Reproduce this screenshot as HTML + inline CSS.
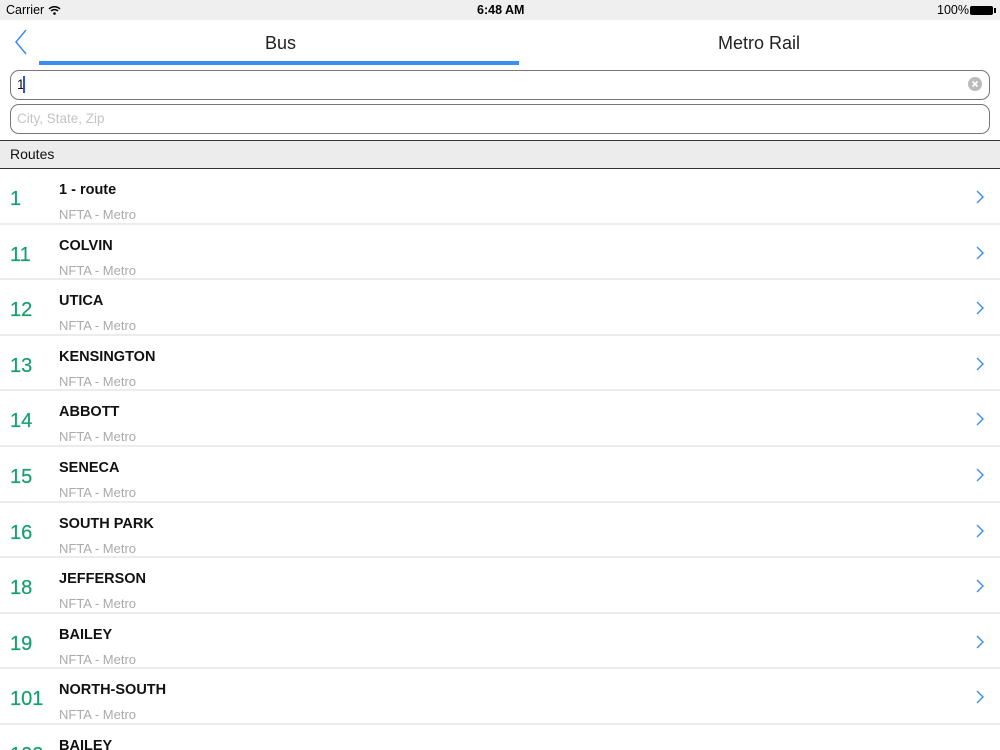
<!DOCTYPE html>
<html style="width:1000px;height:750px;overflow:hidden"><head><meta charset="utf-8"><style>
*{margin:0;padding:0;box-sizing:border-box}
body{width:1000px;height:750px;overflow:hidden;background:#fff;font-family:"Liberation Sans",Helvetica,Arial,sans-serif;position:relative}
.sb{position:absolute;left:0;top:0;width:1000px;height:20px;background:#efefef;font-size:12.5px;color:#000}
.sb span{position:absolute;top:3px}
.tab{position:absolute;top:33px;font-size:18px;color:#222}
.ul{position:absolute;left:39px;top:61px;width:480px;height:4px;background:#3a8ef0}
.inp{position:absolute;left:10px;width:980px;height:30px;border:1.5px solid #777;border-radius:9px;font-size:13.5px}
.hdr{position:absolute;left:0;top:140px;width:1000px;height:29px;background:#ececec;border-top:1.5px solid #333;border-bottom:1.5px solid #333;font-size:14px;padding:5px 10px;color:#111}
.row{position:absolute;left:0;width:1000px;height:55.6px;border-bottom:2px solid #ececec}
.num{position:absolute;left:10px;top:19px;font-size:20px;color:#14a06c;-webkit-text-stroke:0.2px #14a06c}
.t{position:absolute;left:59px;top:13px;font-size:14.5px;font-weight:bold;color:#111}
.s{position:absolute;left:59px;top:38px;font-size:13px;color:#aaa}
.ch{position:absolute;left:975px;top:21px}
</style></head><body>
<div class="sb"><span style="left:6px">Carrier</span>
<svg style="position:absolute;left:48px;top:5px" width="13" height="10" viewBox="0 0 13 10"><path d="M1 4a8 8 0 0 1 11 0M3 6a5 5 0 0 1 7 0" stroke="#000" stroke-width="1.5" fill="none"/><circle cx="6.5" cy="8.5" r="1.3"/></svg>
<span style="left:477px;font-weight:bold">6:48 AM</span>
<span style="left:937px">100%</span>
<div style="position:absolute;left:970px;top:6px;width:23px;height:9px;background:#000;border-radius:2px"></div><div style="position:absolute;left:994px;top:8px;width:2px;height:5px;background:#000"></div>
</div>
<svg style="position:absolute;left:14px;top:29px" width="14" height="26" viewBox="0 0 14 26"><path d="M12 1L2 13l10 12" stroke="#3a8ef0" stroke-width="1.5" fill="none"/></svg>
<div class="tab" style="left:265px">Bus</div>
<div class="tab" style="left:718px">Metro Rail</div>
<div class="ul"></div>
<div class="inp" style="top:70px"><span style="position:absolute;left:6px;top:6px;color:#111">1</span><span style="position:absolute;left:12px;top:5px;width:2px;height:17px;background:#3050e0"></span>
<svg style="position:absolute;left:957px;top:6px" width="14" height="14" viewBox="0 0 14 14"><circle cx="7" cy="7" r="7" fill="#bbb"/><path d="M4.5 4.5l5 5M9.5 4.5l-5 5" stroke="#fff" stroke-width="1.6"/></svg></div>
<div class="inp" style="top:104px"><span style="position:absolute;left:6px;top:6px;color:#c4c4c4">City, State, Zip</span></div>
<div class="hdr">Routes</div>
<div class="row" style="top:169px"><div class="num">1</div><div class="t">1 - route</div><div class="s">NFTA - Metro</div><svg class="ch" width="10" height="14"><path d="M2 1l6 6-6 6" stroke="#3a8ef0" stroke-width="1.4" fill="none"/></svg></div>
<div class="row" style="top:224.6px"><div class="num">11</div><div class="t">COLVIN</div><div class="s">NFTA - Metro</div><svg class="ch" width="10" height="14"><path d="M2 1l6 6-6 6" stroke="#3a8ef0" stroke-width="1.4" fill="none"/></svg></div>
<div class="row" style="top:280.2px"><div class="num">12</div><div class="t">UTICA</div><div class="s">NFTA - Metro</div><svg class="ch" width="10" height="14"><path d="M2 1l6 6-6 6" stroke="#3a8ef0" stroke-width="1.4" fill="none"/></svg></div>
<div class="row" style="top:335.8px"><div class="num">13</div><div class="t">KENSINGTON</div><div class="s">NFTA - Metro</div><svg class="ch" width="10" height="14"><path d="M2 1l6 6-6 6" stroke="#3a8ef0" stroke-width="1.4" fill="none"/></svg></div>
<div class="row" style="top:391.4px"><div class="num">14</div><div class="t">ABBOTT</div><div class="s">NFTA - Metro</div><svg class="ch" width="10" height="14"><path d="M2 1l6 6-6 6" stroke="#3a8ef0" stroke-width="1.4" fill="none"/></svg></div>
<div class="row" style="top:447px"><div class="num">15</div><div class="t">SENECA</div><div class="s">NFTA - Metro</div><svg class="ch" width="10" height="14"><path d="M2 1l6 6-6 6" stroke="#3a8ef0" stroke-width="1.4" fill="none"/></svg></div>
<div class="row" style="top:502.6px"><div class="num">16</div><div class="t">SOUTH PARK</div><div class="s">NFTA - Metro</div><svg class="ch" width="10" height="14"><path d="M2 1l6 6-6 6" stroke="#3a8ef0" stroke-width="1.4" fill="none"/></svg></div>
<div class="row" style="top:558.2px"><div class="num">18</div><div class="t">JEFFERSON</div><div class="s">NFTA - Metro</div><svg class="ch" width="10" height="14"><path d="M2 1l6 6-6 6" stroke="#3a8ef0" stroke-width="1.4" fill="none"/></svg></div>
<div class="row" style="top:613.8px"><div class="num">19</div><div class="t">BAILEY</div><div class="s">NFTA - Metro</div><svg class="ch" width="10" height="14"><path d="M2 1l6 6-6 6" stroke="#3a8ef0" stroke-width="1.4" fill="none"/></svg></div>
<div class="row" style="top:669.4px"><div class="num">101</div><div class="t">NORTH-SOUTH</div><div class="s">NFTA - Metro</div><svg class="ch" width="10" height="14"><path d="M2 1l6 6-6 6" stroke="#3a8ef0" stroke-width="1.4" fill="none"/></svg></div>
<div class="row" style="top:725px"><div class="num">102</div><div class="t">BAILEY</div><div class="s">NFTA - Metro</div></div>
</body></html>
